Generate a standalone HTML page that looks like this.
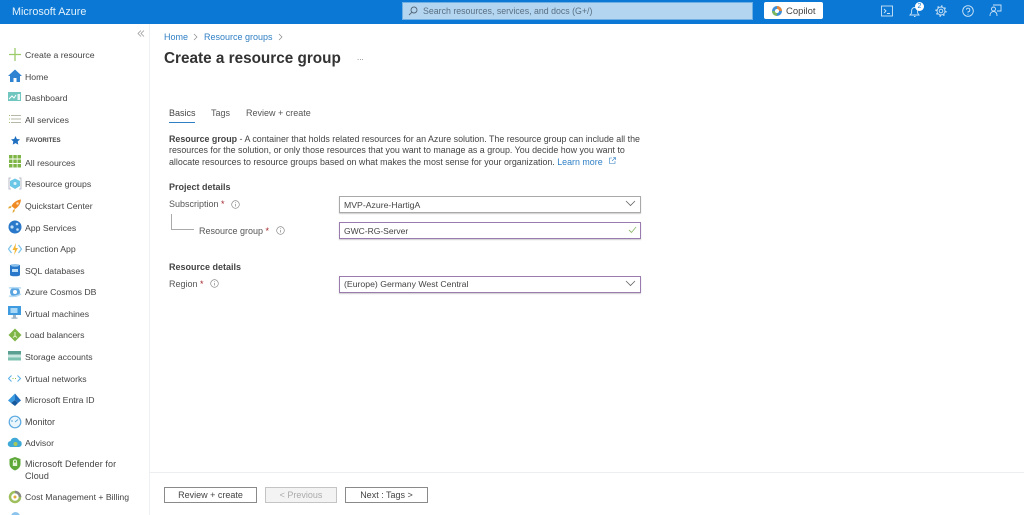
<!DOCTYPE html>
<html lang="en"><head><meta charset="utf-8"><title>Create a resource group</title>
<style>
html,body{margin:0;padding:0;background:#fff}
#p{position:relative;width:1024px;height:515px;overflow:hidden;background:#fff;font-family:"Liberation Sans",sans-serif;color:#3a3a3a;font-size:9px;filter:blur(.3px)}
#p div,#p span.a,#p svg{position:absolute}
.t{white-space:nowrap;line-height:12px}
.n{left:25px;white-space:nowrap;line-height:12px;color:#444;font-size:8.7px}
.i{left:8px;width:14px;height:14px;overflow:visible}
.box{left:339px;width:300px;height:15px;border:1px solid #a9a9a9;box-shadow:0 1px 1px #ccc}
.pur{border-color:#9a7bb0}
.v{left:344px;white-space:nowrap;line-height:12px;color:#444;font-size:8.7px}
.lbl{white-space:nowrap;line-height:12px;color:#555;font-size:9px}
.btn{top:487px;height:14px;border:1px solid #8a8a8a;text-align:center;line-height:14px;color:#444;font-size:9px;white-space:nowrap}
</style></head><body><div id="p">
<div style="left:0;top:0;width:1024px;height:24px;background:#0a78d4"></div>
<div class="t" style="left:12px;top:6px;color:#e4f1fb;font-size:10.8px">Microsoft Azure</div>
<div style="left:402px;top:2px;width:349px;height:16px;background:#b3d5f0;border:1px solid #6fb0e4"></div>
<svg style="left:408px;top:6px" width="10" height="10" viewBox="0 0 10 10" fill="none" stroke="#567" stroke-width=".9"><circle cx="6" cy="4" r="3"/><path d="M4 6.200 1 9"/></svg>
<div class="t" style="left:423px;top:5px;color:#5a6f82;font-size:8.800px">Search resources, services, and docs (G+/)</div>
<div style="left:764px;top:2px;width:59px;height:17px;background:#fff;border-radius:2px"></div>
<svg style="left:772px;top:6px" width="10" height="10" viewBox="0 0 10 10"><circle cx="5" cy="5" r="5" fill="#3f8fd8"/><path d="M5 0A5 5 0 0 1 10 5H5Z" fill="#e8883a"/><path d="M0 5A5 5 0 0 0 5 10V5Z" fill="#7bb661"/><circle cx="5" cy="5" r="2" fill="#fff"/></svg>
<div class="t" style="left:786px;top:6px;color:#444;font-size:9.500px">Copilot</div>
<svg style="left:881px;top:5px" width="12" height="12" viewBox="0 0 12 12" fill="none" stroke="#cfe4f6" stroke-width=".9"><rect x=".5" y="1" width="11" height="10"/><path d="M3 4l2 2-2 2M6 8.500h3"/></svg>
<svg style="left:909px;top:4px" width="12" height="14" viewBox="0 0 12 14" fill="none" stroke="#cfe4f6" stroke-width=".9"><path d="M1 11h9L8.600 9V6.500A3 3 0 0 0 2.600 6.500V9ZM5 12.500h1.500"/></svg>
<div style="left:915px;top:2px;width:9px;height:9px;border-radius:50%;background:#fff;color:#0a78d4;font-size:7px;line-height:9px;text-align:center">2</div>
<svg style="left:935px;top:5px" width="12" height="12" viewBox="0 0 12 12" fill="none" stroke="#cfe4f6"><circle cx="6" cy="6" r="1.800" stroke-width=".9"/><circle cx="6" cy="6" r="4" stroke-width=".9"/><circle cx="6" cy="6" r="5" stroke-width="1.200" stroke-dasharray="1.600 2.300"/></svg>
<svg style="left:962px;top:5px" width="12" height="12" viewBox="0 0 12 12" fill="none" stroke="#cfe4f6" stroke-width=".9"><circle cx="6" cy="6" r="5.300"/><path d="M4.300 4.600A1.800 1.800 0 1 1 6 6.800V7.600M6 8.800v.8"/></svg>
<svg style="left:989px;top:4px" width="13" height="13" viewBox="0 0 13 13" fill="none" stroke="#cfe4f6" stroke-width=".9"><path d="M4 1h8v6H8"/><circle cx="4.500" cy="5" r="2"/><path d="M1 12c0-3 1.500-4.500 3.500-4.500S8 9 8 12"/></svg>

<div style="left:149px;top:24px;width:1px;height:491px;background:#eef1f3"></div>
<svg style="left:137px;top:30px" width="8" height="7" viewBox="0 0 8 7" fill="none" stroke="#9a9a9a" stroke-width=".8"><path d="M4 .5 1 3.500l3 3M7 .5 4 3.500l3 3"/></svg>

<svg class="i" style="top:48px" viewBox="0 0 14 14" stroke="#9ccb6b" stroke-width="1.300"><path d="M7 0v13M1 6.500h12"/></svg>
<div class="n" style="top:49px">Create a resource</div>
<svg class="i" style="top:69px" viewBox="0 0 14 14"><path d="M7 .5 0 7h2v6h3.500V9h3v4H12V7h2Z" fill="#2f83d1"/></svg>
<div class="n" style="top:71px">Home</div>
<svg class="i" style="top:91px" viewBox="0 0 14 14"><rect y="1" width="13" height="9" fill="#72c6c0"/><path d="M1 8l3-3 2 2 2-3" fill="none" stroke="#fff"/><rect x="9.500" y="3" width="2.500" height="6" fill="#e8f6f5"/></svg>
<div class="n" style="top:92px">Dashboard</div>
<svg class="i" style="top:113px" viewBox="0 0 14 14" stroke="#b5b8a8" stroke-width="1"><path d="M3 2.500h10M3 6h10M3 9.500h10"/><path d="M1 2.500h1M1 6h1M1 9.500h1" stroke="#9ec06c"/></svg>
<div class="n" style="top:114px">All services</div>
<svg style="left:11px;top:136px" width="9" height="9" viewBox="0 0 10 10"><path d="M5 0l1.500 3.300 3.500.4-2.600 2.400.7 3.500L5 7.900 1.900 9.600l.7-3.500L0 3.700l3.500-.4Z" fill="#1f6fc0"/></svg>
<div class="t" style="left:26px;top:135px;font-size:6.200px;font-weight:bold;color:#444">FAVORITES</div>
<svg class="i" style="top:155px" viewBox="0 0 14 14" fill="#7fb547"><rect x="1" width="3.500" height="3.500"/><rect x="5.300" width="3.500" height="3.500"/><rect x="9.500" width="3.500" height="3.500"/><rect x="1" y="4.500" width="3.500" height="3.500"/><rect x="5.300" y="4.500" width="3.500" height="3.500"/><rect x="9.500" y="4.500" width="3.500" height="3.500"/><rect x="1" y="9" width="3.500" height="3.500"/><rect x="5.300" y="9" width="3.500" height="3.500"/><rect x="9.500" y="9" width="3.500" height="3.500"/></svg>
<div class="n" style="top:157px">All resources</div>
<svg class="i" style="top:177px" viewBox="0 0 14 14"><path d="M3 1H1v11h2M11 1h2v11h-2" fill="none" stroke="#aab" stroke-width=".8"/><path d="M7 1.500 12 4v5l-5 3-5-3V4Z" fill="#6cc7e6"/><circle cx="7" cy="6.500" r="1.500" fill="#dff3fa"/></svg>
<div class="n" style="top:178px">Resource groups</div>
<svg class="i" style="top:199px" viewBox="0 0 14 14"><path d="M13 .5C9 1 5.500 3 3.500 7l3.500 3c3.500-2 5.500-5 6-9.500Z" fill="#f08a24"/><path d="M3.500 7 1 7.500 0 9.500l3-.5ZM7 10l-.5 2.500L4.500 14l.5-3Z" fill="#e0a93a"/><circle cx="9.500" cy="4.500" r="1.200" fill="#ffe2b8"/></svg>
<div class="n" style="top:200px">Quickstart Center</div>
<svg class="i" style="top:220px" viewBox="0 0 14 14"><circle cx="7" cy="7" r="6.500" fill="#2a78c9"/><circle cx="4" cy="7" r="1.600" fill="#bfe0f7"/><circle cx="9" cy="4" r="1.300" fill="#bfe0f7"/><circle cx="9.500" cy="9.500" r="1.300" fill="#bfe0f7"/></svg>
<div class="n" style="top:222px">App Services</div>
<svg class="i" style="top:242px" viewBox="0 0 14 14"><path d="M3.500 3 .5 7l3 4M10.500 3l3 4-3 4" fill="none" stroke="#7cc4ea" stroke-width="1.200"/><path d="M8 1 4.500 8H7l-1 5 4-7H7.500Z" fill="#f2b632"/></svg>
<div class="n" style="top:243px">Function App</div>
<svg class="i" style="top:263px" viewBox="0 0 14 14"><path d="M2 2.500C2 .8 12 .8 12 2.500v9.500C12 13.700 2 13.700 2 12Z" fill="#2a78c9"/><ellipse cx="7" cy="2.500" rx="4" ry="1.200" fill="#8cc4ee"/><rect x="4" y="6" width="6" height="3" fill="#bfe0f7"/></svg>
<div class="n" style="top:265px">SQL databases</div>
<svg class="i" style="top:285px" viewBox="0 0 14 14"><circle cx="7" cy="7" r="5" fill="#5aa5e0"/><path d="M1 3c3-1 9 0 12 0M1 11c4 1 9 0 12-2" fill="none" stroke="#b6dcf5" stroke-width="1.500"/><circle cx="7" cy="7" r="2" fill="#fff"/></svg>
<div class="n" style="top:286px">Azure Cosmos DB</div>
<svg class="i" style="top:306px" viewBox="0 0 14 14"><rect width="13" height="9" fill="#3e9be0"/><rect x="2.500" y="2" width="7" height="5" fill="#a9d9f6"/><rect x="5" y="9" width="3" height="2.500" fill="#9fb5c6"/><rect x="3.500" y="11.500" width="6" height="1.300" fill="#9fb5c6"/></svg>
<div class="n" style="top:308px">Virtual machines</div>
<svg class="i" style="top:328px" viewBox="0 0 14 14"><path d="M7 .5 13.500 7 7 13.500.5 7Z" fill="#7fb547"/><path d="M7 4v4M5 9.500l2-1.500 2 1.500" fill="none" stroke="#e8f5d5"/></svg>
<div class="n" style="top:329px">Load balancers</div>
<svg class="i" style="top:350px" viewBox="0 0 14 14"><rect y="1" width="13" height="3.500" fill="#5b9e92"/><rect y="4.500" width="13" height="3" fill="#cbe6e0"/><rect y="7.500" width="13" height="3" fill="#7cc0b0"/></svg>
<div class="n" style="top:351px">Storage accounts</div>
<svg class="i" style="top:372px" viewBox="0 0 14 14" fill="none" stroke="#59b0e8" stroke-width="1"><path d="M3.500 3.500.5 6.500l3 3M9.500 3.500l3 3-3 3"/><path d="M4.500 6.500h1M7 6.500h1" stroke="#8bc34a"/></svg>
<div class="n" style="top:373px">Virtual networks</div>
<svg class="i" style="top:393px" viewBox="0 0 14 14"><path d="M7 .5 0 7.500l3 2.500L7 7Z" fill="#3b9be0"/><path d="M7 .5 13 7.500 10 10 7 7Z" fill="#1f6fc0"/><path d="M3 10l4-3 3 3-3 3Z" fill="#155a9e"/></svg>
<div class="n" style="top:394px">Microsoft Entra ID</div>
<svg class="i" style="top:415px" viewBox="0 0 14 14"><circle cx="7" cy="7" r="5.800" fill="#eaf5fc" stroke="#5aa9e0" stroke-width="1.200"/><path d="M7 7l3-2.500M3 6h2" stroke="#5aa9e0" fill="none"/></svg>
<div class="n" style="top:416px;font-size:9px">Monitor</div>
<svg class="i" style="top:436px" viewBox="0 0 14 14"><path d="M3 11a3 3 0 0 1-.5-6A4.500 4.500 0 0 1 11 4.500a3.300 3.300 0 0 1 0 6.500Z" fill="#3fa9d8"/><circle cx="7.500" cy="8" r="2" fill="#a8c85a"/></svg>
<div class="n" style="top:437px">Advisor</div>
<svg class="i" style="top:457px" viewBox="0 0 14 14"><path d="M7 0 12.500 2v5c0 3-2.500 5.500-5.500 6.500C4 12.500 1.500 10 1.500 7V2Z" fill="#5ea83a"/><rect x="4.800" y="5.500" width="4.400" height="3.500" fill="#e4f2d8"/><path d="M5.500 5.500V4.500a1.500 1.500 0 0 1 3 0v1" fill="none" stroke="#e4f2d8"/></svg>
<div class="n" style="top:458px;line-height:12px;font-size:9px;letter-spacing:.1px">Microsoft Defender for<br>Cloud</div>
<svg class="i" style="top:490px" viewBox="0 0 14 14"><circle cx="7" cy="7" r="5" fill="#fff" stroke="#9fbf5f" stroke-width="2.500"/><path d="M7 2A5 5 0 0 1 12 7" fill="none" stroke="#888" stroke-width="2.500"/><circle cx="7" cy="7" r="1.500" fill="#e0a93a"/></svg>
<div class="n" style="top:491px">Cost Management + Billing</div>
<div style="left:11px;top:512px;width:9px;height:9px;border-radius:50%;background:#8cc4ee"></div>

<div class="t" style="left:164px;top:31px;color:#2f7fc4;font-size:9px">Home</div>
<svg style="left:193px;top:33px" width="5" height="8" viewBox="0 0 5 8" fill="none" stroke="#888" stroke-width=".7"><path d="M1 1l3 3-3 3"/></svg>
<div class="t" style="left:204px;top:31px;color:#2f7fc4;font-size:9px">Resource groups</div>
<svg style="left:278px;top:33px" width="5" height="8" viewBox="0 0 5 8" fill="none" stroke="#888" stroke-width=".7"><path d="M1 1l3 3-3 3"/></svg>
<div class="t" style="left:164px;top:50px;line-height:18px;color:#333;font-size:15.300px;font-weight:bold">Create a resource group</div>
<div class="t" style="left:357px;top:52px;color:#777;font-size:8px">...</div>

<div class="t" style="left:169px;top:107px;color:#444;font-size:9px">Basics</div>
<div style="left:169px;top:122px;width:26px;height:1px;background:#2f7fc4"></div>
<div class="t" style="left:211px;top:107px;color:#555;font-size:9px">Tags</div>
<div class="t" style="left:246px;top:107px;color:#555;font-size:9px">Review + create</div>

<div class="t" style="left:169px;top:133px;color:#444;font-size:8.900px"><b style="font-weight:bold">Resource group</b> - A container that holds related resources for an Azure solution. The resource group can include all the</div>
<div class="t" style="left:169px;top:144px;color:#444;font-size:8.900px">resources for the solution, or only those resources that you want to manage as a group. You decide how you want to</div>
<div class="t" style="left:169px;top:156px;color:#444;font-size:8.900px">allocate resources to resource groups based on what makes the most sense for your organization. <span style="color:#2f7fc4">Learn more</span></div>
<svg style="left:609px;top:157px" width="7" height="7" viewBox="0 0 7 7" fill="none" stroke="#2f7fc4" stroke-width=".6"><path d="M3 1H.5v5.500H6V4M4 .5h2.500V3M6.500.5 3 4"/></svg>

<div class="t" style="left:169px;top:181px;color:#444;font-size:9px;font-weight:bold">Project details</div>
<div class="lbl" style="left:169px;top:198px">Subscription <span style="color:#a4262c">*</span></div>
<svg style="left:231px;top:200px" width="9" height="9" viewBox="0 0 9 9" fill="none" stroke="#777" stroke-width=".6"><circle cx="4.500" cy="4.500" r="3.800"/><path d="M4.500 4v2.500M4.500 2.300v.8"/></svg>
<div class="box" style="top:196px"></div>
<div class="v" style="top:199px">MVP-Azure-HartigA</div>
<svg style="left:625px;top:200px" width="11" height="7" viewBox="0 0 11 7" fill="none" stroke="#666" stroke-width=".8"><path d="M1 1l4.500 4.500L10 1"/></svg>

<div style="left:171px;top:214px;width:22px;height:15px;border-left:1px solid #aaa;border-bottom:1px solid #aaa"></div>
<div class="lbl" style="left:199px;top:225px">Resource group <span style="color:#a4262c">*</span></div>
<svg style="left:276px;top:226px" width="9" height="9" viewBox="0 0 9 9" fill="none" stroke="#777" stroke-width=".6"><circle cx="4.500" cy="4.500" r="3.800"/><path d="M4.500 4v2.500M4.500 2.300v.8"/></svg>
<div class="box pur" style="top:222px"></div>
<div class="v" style="top:225px;font-size:8.500px">GWC-RG-Server</div>
<svg style="left:628px;top:226px" width="9" height="8" viewBox="0 0 9 8" fill="none" stroke="#8dbb70" stroke-width=".9"><path d="M1 4l2.500 2.500L8 1"/></svg>

<div class="t" style="left:169px;top:261px;color:#444;font-size:9px;font-weight:bold">Resource details</div>
<div class="lbl" style="left:169px;top:278px">Region <span style="color:#a4262c">*</span></div>
<svg style="left:210px;top:279px" width="9" height="9" viewBox="0 0 9 9" fill="none" stroke="#777" stroke-width=".6"><circle cx="4.500" cy="4.500" r="3.800"/><path d="M4.500 4v2.500M4.500 2.300v.8"/></svg>
<div class="box pur" style="top:276px"></div>
<div class="v" style="top:278px">(Europe) Germany West Central</div>
<svg style="left:625px;top:280px" width="11" height="7" viewBox="0 0 11 7" fill="none" stroke="#666" stroke-width=".8"><path d="M1 1l4.500 4.500L10 1"/></svg>

<div style="left:150px;top:472px;width:874px;height:1px;background:#eceeef"></div>
<div class="btn" style="left:164px;width:91px">Review + create</div>
<div class="btn" style="left:265px;width:70px;background:#f3f3f3;border-color:#c4c4c4;color:#aaa">&lt; Previous</div>
<div class="btn" style="left:345px;width:81px">Next : Tags &gt;</div>
</div></body></html>
